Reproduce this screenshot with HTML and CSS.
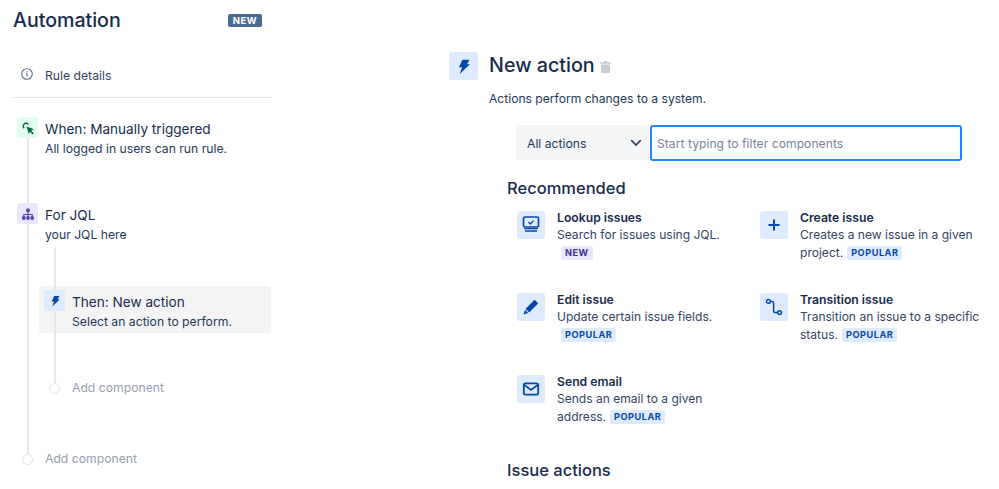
FILE: index.html
```html
<!DOCTYPE html>
<html lang="en">
<head>
<meta charset="utf-8">
<title>Automation</title>
<link rel="stylesheet" href="styles.css">
</head>
<body>
<div class="page">
  <aside class="side">
    <header class="side-head">
      <h1 class="side-title">Automation</h1>
      <span class="lozenge-dark">NEW</span>
    </header>
    <div class="details">
      <svg class="details-icon" viewBox="0 0 12 12"><circle cx="6" cy="6" r="5.3" fill="none" stroke="#5e6c84" stroke-width="1.1"/><rect x="5.4" y="5.2" width="1.2" height="3.4" fill="#5e6c84"/><rect x="5.4" y="3.1" width="1.2" height="1.2" fill="#5e6c84"/></svg>
      <span>Rule details</span>
    </div>
    <div class="tree">
      <span class="line line-main"></span>
      <span class="line line-sub"></span>
      <div class="step step-when">
        <span class="step-icon icon-green">
          <svg viewBox="0 0 14 14" width="14" height="14"><path d="M5.6 5.6l7.4 2.7-2.9 1.2 2.7 2.7-1.2 1.2-2.7-2.7L7.7 13z" fill="#006644"/><path d="M3.2 7.2A2.8 2.8 0 1 1 7.4 3.6" fill="none" stroke="#006644" stroke-width="1.4"/></svg>
        </span>
        <div><div class="step-title">When: Manually triggered</div><div class="step-sub">All logged in users can run rule.</div></div>
      </div>
      <div class="step step-for">
        <span class="step-icon icon-purple">
          <svg viewBox="0 0 14 14" width="14" height="14"><rect x="5.2" y="1.5" width="3.6" height="3.6" rx="1.2" fill="#5243aa"/><circle cx="2.8" cy="11" r="1.9" fill="#5243aa"/><circle cx="7" cy="11" r="1.9" fill="#5243aa"/><circle cx="11.2" cy="11" r="1.9" fill="#5243aa"/><path d="M7 5v5M2.8 10V7.5h8.4V10" fill="none" stroke="#5243aa" stroke-width="1.1"/></svg>
        </span>
        <div><div class="step-title">For JQL</div><div class="step-sub">your JQL here</div></div>
      </div>
      <div class="step step-then">
        <span class="step-icon icon-blue">
          <svg viewBox="0 0 14 14" width="14" height="14"><path d="M6.2 2h5.2L9.6 5.4h2.2L4.2 12.6 6 7.6H3.6z" fill="#0747a6"/></svg>
        </span>
        <div><div class="step-title">Then: New action</div><div class="step-sub">Select an action to perform.</div></div>
      </div>
      <div class="add add-inner"><span class="dot"></span><span>Add component</span></div>
      <div class="add add-outer"><span class="dot"></span><span>Add component</span></div>
    </div>
  </aside>
  <main class="main">
    <header class="main-head">
      <span class="main-icon">
        <svg viewBox="0 0 14 14" width="19" height="19"><path d="M6.2 2h5.2L9.6 5.4h2.2L4.2 12.6 6 7.6H3.6z" fill="#0747a6"/></svg>
      </span>
      <h2 class="main-title">New action</h2>
      <svg class="trash" viewBox="0 0 11 12" width="11" height="12"><path d="M3.8 0h3.4v1.2H11v1.6H0V1.2h3.8zM1 3.6h9V11a1 1 0 0 1-1 1H2a1 1 0 0 1-1-1z" fill="#c9ccd1"/></svg>
    </header>
    <p class="main-desc">Actions perform changes to a system.</p>
    <div class="filters">
      <div class="select"><span>All actions</span>
        <svg viewBox="0 0 12 8" width="12" height="8"><path d="M1.2 1.2L6 6l4.8-4.8" fill="none" stroke="#344563" stroke-width="1.7"/></svg>
      </div>
      <div class="input">Start typing to filter components</div>
    </div>
    <h3 class="section">Recommended</h3>
    <div class="cards">
      <article class="card">
        <span class="card-icon"><svg viewBox="0 0 18 18" width="18" height="18"><rect x="1.5" y="1" width="15" height="10" rx="1.5" fill="none" stroke="#0747a6" stroke-width="1.7"/><path d="M6.5 6l2 2 3-3.4" fill="none" stroke="#0747a6" stroke-width="1.4"/><path d="M2 12.6h14M3 15h12" stroke="#0747a6" stroke-width="1.4"/></svg></span>
        <div><div class="card-title">Lookup issues</div><div class="card-desc">Search for issues using JQL.<span class="lozenge purple">NEW</span></div></div>
      </article>
      <article class="card">
        <span class="card-icon"><svg viewBox="0 0 18 18" width="18" height="18"><path d="M9 3.5v11M3.5 9h11" fill="none" stroke="#0747a6" stroke-width="2"/></svg></span>
        <div><div class="card-title">Create issue</div><div class="card-desc">Creates a new issue in a given project.<span class="lozenge">POPULAR</span></div></div>
      </article>
      <article class="card">
        <span class="card-icon"><svg viewBox="0 0 18 18" width="18" height="18"><path d="M12.6 1.8l3.6 3.6-9 9-3.6-3.6zM3 11.8l3.2 3.2-4.6 1.4z" fill="#0747a6"/></svg></span>
        <div><div class="card-title">Edit issue</div><div class="card-desc">Update certain issue fields.<span class="lozenge">POPULAR</span></div></div>
      </article>
      <article class="card">
        <span class="card-icon"><svg viewBox="0 0 18 18" width="18" height="18"><circle cx="3.4" cy="3.4" r="1.9" fill="none" stroke="#0747a6" stroke-width="1.4"/><circle cx="14.6" cy="14.6" r="1.9" fill="none" stroke="#0747a6" stroke-width="1.4"/><path d="M5.3 3.4H7a1.6 1.6 0 0 1 1.6 1.6v8a1.6 1.6 0 0 0 1.6 1.6h2.5" fill="none" stroke="#0747a6" stroke-width="1.5"/></svg></span>
        <div><div class="card-title">Transition issue</div><div class="card-desc">Transition an issue to a specific status.<span class="lozenge">POPULAR</span></div></div>
      </article>
      <article class="card">
        <span class="card-icon"><svg viewBox="0 0 18 18" width="18" height="18"><rect x="1.8" y="3.4" width="14.4" height="11.2" rx="1.6" fill="none" stroke="#0747a6" stroke-width="1.8"/><path d="M2.4 5l6.6 5 6.6-5" fill="none" stroke="#0747a6" stroke-width="1.6"/></svg></span>
        <div><div class="card-title">Send email</div><div class="card-desc">Sends an email to a given address.<span class="lozenge">POPULAR</span></div></div>
      </article>
    </div>
    <h3 class="section section-issue">Issue actions</h3>
  </main>
</div>
</body>
</html>
```
FILE: styles.css
```css
* { box-sizing: border-box; }
html, body { margin: 0; height: 100%; overflow: hidden; background: #fff; }
body { font-family: Inter, "Liberation Sans", sans-serif; color: #172b4d; }
.page { display: flex; height: 489px; overflow: hidden; }

.side { width: 259px; margin-left: 12px; flex: none; }
.side-head { display: flex; justify-content: space-between; align-items: center; padding: 7px 9px 0 1px; height: 33px; }
.side-title { margin: 0; font-size: 19.6px; font-weight: 500; line-height: 24px; }
.lozenge-dark { background: #4a6a92; color: #fff; font-size: 9.5px; font-weight: 700; letter-spacing: .5px; line-height: 13px; height: 13px; width: 34px; text-align: center; border-radius: 2px; }
.details { display: flex; align-items: center; gap: 12px; height: 65px; padding: 20px 0 0 9px; border-bottom: 1px solid #e4e5e7; font-size: 12.2px; color: #344563; }
.details-icon { width: 12px; height: 12px; margin-top: -2px; }

.tree { position: relative; display: flow-root; height: 391px; }
.line { position: absolute; width: 2px; background: #e6e7ea; }
.line-main { left: 15px; top: 40px; height: 316px; }
.line-sub { left: 42px; top: 150px; height: 136px; }
.step { display: flex; gap: 7px; }
.step-when { margin: 19px 0 0 5px; }
.step-for { margin: 45px 0 0 5px; height: 46px; }
.step-then { margin: 37px 0 0 27px; padding: 4px 5px; height: 47px; background: #f4f4f5; border-radius: 3px; }
.step-icon { position: relative; width: 21px; height: 21px; flex: none; border-radius: 2px; display: flex; align-items: center; justify-content: center; }
.icon-green { background: #e3fcef; }
.icon-purple { background: #eae6ff; }
.icon-blue { background: #deebff; }
.step-title { font-size: 13.6px; line-height: 18px; margin-top: 3px; color: #172b4d; }
.step-sub { font-size: 12.2px; line-height: 18px; margin-top: 2px; color: #253858; }
.add { display: flex; align-items: center; position: relative; font-size: 12.2px; color: #97a0af; line-height: 18px; }
.dot { width: 11px; height: 11px; border-radius: 50%; background: #fff; border: 1.5px solid #dfe1e6; flex: none; }
.add-inner { margin: 46px 0 0 37px; gap: 12px; }
.add-outer { margin: 53px 0 0 10px; gap: 12px; }

.main { flex: 1; min-width: 0; padding: 52px 0 0 178px; }
.main-head { display: flex; align-items: center; height: 28px; }
.main-icon { width: 29px; height: 28px; background: #deebff; border-radius: 3px; display: flex; align-items: center; justify-content: center; margin-right: 11px; }
.main-title { margin: -2px 0 0; font-size: 19.7px; font-weight: 500; line-height: 26px; }
.trash { margin-left: 5px; margin-top: 1px; }
.main-desc { margin: 10px 0 0 40px; font-size: 12.1px; line-height: 18px; color: #253858; }
.filters { display: flex; margin: 17px 0 0 67px; gap: 1px; height: 36px; }
.select { width: 133px; height: 35px; background: #f4f5f7; border-radius: 3px; display: flex; align-items: center; justify-content: space-between; padding: 1px 7px 0 11px; font-size: 12.2px; color: #253858; }
.input { width: 312px; height: 36px; border: 2px solid #2684ff; border-radius: 3px; padding: 0 5px; display: flex; align-items: center; font-size: 12.2px; color: #7a869a; }
.section { margin: 17px 0 0 58px; font-size: 16.5px; font-weight: 500; line-height: 20px; color: #172b4d; }
.cards { display: grid; grid-template-columns: 243px 243px; grid-auto-rows: 82px; margin: 13px 0 0 68px; }
.card { display: flex; gap: 12px; }
.card-icon { width: 28px; height: 28px; flex: none; background: #deebff; border-radius: 3px; display: flex; align-items: center; justify-content: center; }
.card-title { font-size: 12.2px; font-weight: 600; line-height: 14px; color: #172b4d; }
.card-desc { width: 186px; font-size: 12.05px; line-height: 18px; margin-top: 1px; color: #344563; }
.lozenge { display: inline-block; background: #deebff; color: #0747a6; font-size: 9.2px; font-weight: 700; letter-spacing: .5px; line-height: 14px; padding: 0 4px; margin-left: 4px; border-radius: 2px; vertical-align: 1px; }
.purple { background: #eae6ff; color: #403294; }
.section-issue { margin-top: 3px; }
```
